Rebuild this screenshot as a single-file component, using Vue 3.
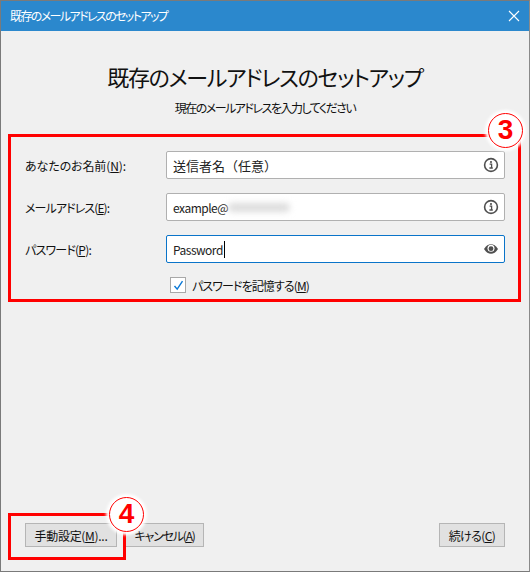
<script setup>
const fields = [
  { pre: 'あなたのお名前(', key: 'N', value: '送信者名\uFF08任意\uFF09', labelClass: 'l-name', valueClass: 'v-jp', icon: 'info' },
  { pre: 'メールアドレス(', key: 'E', value: 'example@', labelClass: 'l-mail', valueClass: 'v-en', blur: true, icon: 'info' },
  { pre: 'パスワード(', key: 'P', value: 'Password', labelClass: 'l-pass', valueClass: 'v-en', focus: true, icon: 'eye' },
]
</script>

<template>
  <div class="window">
    <header class="titlebar">
      <span class="title">既存のメールアドレスのセットアップ</span>
      <svg class="close" width="12" height="12" viewBox="0 0 12 12">
        <path d="M1 1 L11 11 M11 1 L1 11" stroke="#fff" stroke-width="1.1" fill="none" />
      </svg>
    </header>

    <main class="content">
      <h1 class="heading">既存のメールアドレスのセットアップ</h1>
      <p class="sub">現在のメールアドレスを入力してください</p>

      <section class="form">
        <div v-for="f in fields" :key="f.key" class="row">
          <label class="label" :class="f.labelClass">{{ f.pre }}<u>{{ f.key }}</u>):</label>
          <div class="input" :class="{ focus: f.focus }">
            <span class="value" :class="f.valueClass">{{ f.value }}</span>
            <span v-if="f.focus" class="caret"></span>
            <span v-if="f.blur" class="smudge"></span>
            <svg v-if="f.icon === 'info'" class="icon" width="16" height="16" viewBox="0 0 16 16">
              <circle cx="8" cy="8" r="6.4" fill="none" stroke="#4f4f4f" stroke-width="1.6" />
              <circle cx="8" cy="5" r="1.05" fill="#4f4f4f" />
              <path d="M6.6 7.2 H8.6 V10.8 M6.4 11 H9.8" stroke="#4f4f4f" stroke-width="1.3" fill="none" />
            </svg>
            <svg v-else class="icon" width="16" height="16" viewBox="0 0 16 16">
              <path d="M1 8 C3.2 4.4 5.5 3.3 8 3.3 C10.5 3.3 12.8 4.4 15 8 C12.8 11.6 10.5 12.7 8 12.7 C5.5 12.7 3.2 11.6 1 8 Z" fill="#4f4f4f" />
              <circle cx="8" cy="7.3" r="3.5" fill="#fff" />
              <circle cx="8" cy="7.7" r="2.4" fill="#4f4f4f" />
            </svg>
          </div>
        </div>
        <div class="remember">
          <span class="check">
            <svg width="13" height="13" viewBox="0 0 13 13">
              <path d="M2.5 7 L5.2 10.2 L10.5 2.2" stroke="#0a78d7" stroke-width="1.4" fill="none" />
            </svg>
          </span>
          <span class="remember-text">パスワードを記憶する(<u>M</u>)</span>
        </div>
      </section>
    </main>

    <footer class="footer">
      <button class="btn manual">手動設定(<u>M</u>)...</button>
      <button class="btn cancel">キャンセル(<u>A</u>)</button>
      <button class="btn next">続ける(<u>C</u>)</button>
    </footer>

    <div class="frame frame-a"></div>
    <div class="frame frame-b"></div>
    <div class="badge badge-a">3</div>
    <div class="badge badge-b">4</div>
  </div>
</template>

<style>
html, body { margin: 0; padding: 0; background: #f0f0f0; }
</style>

<style scoped>
.window {
  position: relative;
  width: 530px;
  height: 572px;
  box-sizing: border-box;
  border: 1px solid #7a7a7a;
  border-right-color: #8a8a8a;
  background: #f0f0f0;
  display: flex;
  flex-direction: column;
  overflow: hidden;
  font-family: "Noto Sans CJK JP", "Noto Sans", sans-serif;
  font-feature-settings: "palt";
  color: #111;
  font-size: 12px;
}
.titlebar {
  height: 30px;
  flex: none;
  background: #2b88cd;
  color: #fff;
  display: flex;
  align-items: center;
  justify-content: space-between;
  padding: 0 9px 0 9px;
}
.title { font-size: 12px; line-height: 30px; letter-spacing: -1.6px; }
.close { display: block; }
.content { flex: 1; display: flex; flex-direction: column; align-items: center; }
.heading {
  margin: 30px 0 0;
  font-size: 22px;
  line-height: 30px;
  font-weight: 400;
  letter-spacing: -1.35px;
  color: #111;
}
.sub { margin: 8px 0 0; line-height: 18px; font-size: 12px; letter-spacing: -1.5px; }
.form {
  align-self: stretch;
  margin-top: 34px;
  padding: 0 24px;
  display: flex;
  flex-direction: column;
  gap: 14px;
}
.row { display: flex; align-items: center; height: 28px; }
.label { width: 141px; flex: none; font-size: 12px; }
.l-name { letter-spacing: -0.1px; }
.l-mail { letter-spacing: -0.9px; }
.l-pass { letter-spacing: -0.8px; }
.input {
  position: relative;
  flex: 1;
  height: 28px;
  box-sizing: border-box;
  background: #fff;
  border: 1px solid #b0b0b0;
  border-radius: 2px;
  display: flex;
  align-items: center;
  padding: 0 6px;
}
.input.focus { border-color: #0a74c9; }
.value { color: #222; }
.v-jp { font-size: 13px; font-feature-settings: normal; }
.v-en { font-size: 12px; letter-spacing: -0.5px; }
.caret { width: 1px; height: 17px; background: #000; margin-left: 1px; }
.smudge {
  width: 62px;
  height: 9px;
  background: #dcdcdc;
  border-radius: 5px;
  filter: blur(3px);
}
.icon { position: absolute; right: 5px; top: 5px; }
.remember {
  display: flex;
  align-items: center;
  gap: 6px;
  margin: 0 0 0 145px;
  height: 16px;
}
.remember-text { letter-spacing: -0.9px; }
.check {
  width: 14px;
  height: 14px;
  background: #fff;
  border: 1px solid #a8a8a8;
  display: flex;
  align-items: center;
  justify-content: center;
}
.footer {
  display: flex;
  padding: 0 24px 24px;
  height: 24px;
  gap: 8px;
}
.btn {
  height: 24px;
  box-sizing: border-box;
  border: 1px solid #b5b5b5;
  background: #e1e1e1;
  font: inherit;
  font-feature-settings: "palt";
  font-size: 12px;
  color: #111;
  padding: 0;
}
.manual { width: 92px; letter-spacing: -0.3px; }
.cancel { width: 79px; letter-spacing: -1.2px; }
.next { width: 66px; margin-left: auto; letter-spacing: -0.6px; }
.frame { position: absolute; border: 3px solid #f00; box-sizing: border-box; pointer-events: none; }
.frame-a { left: 7px; top: 133px; width: 513px; height: 168px; }
.frame-b { left: 7px; top: 512px; width: 118px; height: 47px; }
.badge {
  position: absolute;
  width: 35px;
  height: 35px;
  box-sizing: border-box;
  border: 1.5px solid #f00;
  border-radius: 50%;
  background: #fff;
  box-shadow: 0 0 3px 3px #fff;
  color: #f00;
  font-family: "Liberation Sans", sans-serif;
  font-weight: 700;
  font-size: 28px;
  line-height: 32px;
  text-align: center;
}
.badge-a { left: 487px; top: 112px; }
.badge-b { left: 108px; top: 496px; }
</style>
